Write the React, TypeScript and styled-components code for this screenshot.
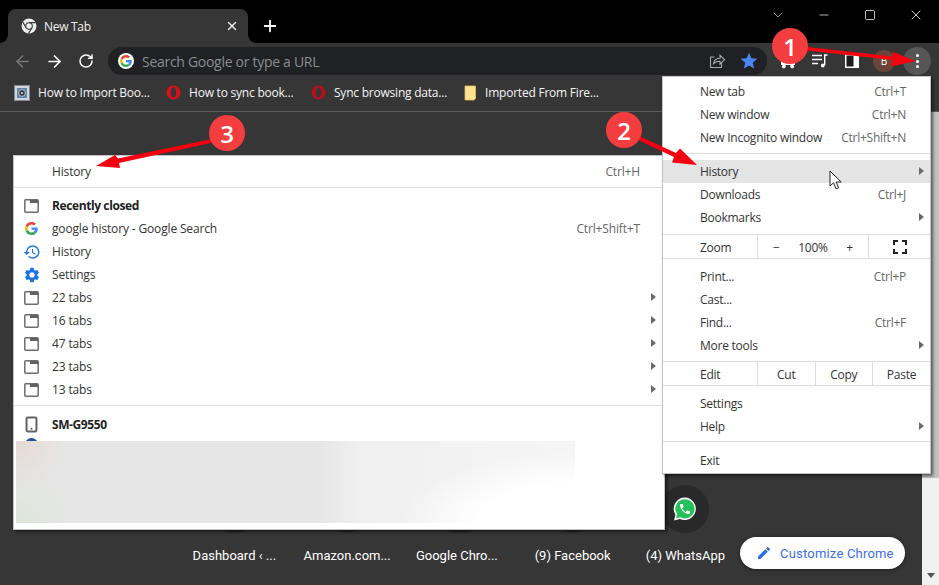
import React from "react"
import styled, { createGlobalStyle } from "styled-components"
import { ArrowLeft, ArrowRight, RotateCw, X, Plus, ChevronDown, Minus, Square, Smartphone } from "lucide-react"
import { MdEdit, MdHistory, MdSettings, MdStar } from "react-icons/md"

const GlobalStyle = createGlobalStyle`
  html, body {
    margin: 0;
    padding: 0;
    background: #363636;
  }
  * {
    box-sizing: border-box;
  }
`

const Screen = styled.div`
  position: relative;
  width: 939px;
  height: 585px;
  overflow: hidden;
  display: flex;
  flex-direction: column;
  background: #363636;
  font-family: "Open Sans", "Liberation Sans", sans-serif;
  font-size: 12px;
`

const TitleBar = styled.div`
  height: 43px;
  flex: none;
  background: #000;
  display: flex;
  align-items: flex-end;
  padding-left: 8px;
  color: #fff;
`

const Tab = styled.div`
  position: relative;
  width: 240px;
  height: 34px;
  background: #363636;
  border-radius: 8px 8px 0 0;
  display: flex;
  align-items: center;
  padding: 0 9px 0 13px;
  gap: 7px;

  &::before,
  &::after {
    content: "";
    position: absolute;
    bottom: 0;
    width: 8px;
    height: 8px;
  }
  &::before {
    left: -8px;
    background: radial-gradient(circle at 0 0, #000 7.5px, #363636 8px);
  }
  &::after {
    right: -8px;
    background: radial-gradient(circle at 100% 0, #000 7.5px, #363636 8px);
  }
`

const TabTitle = styled.span`
  flex: 1;
  color: #f1f1f1;
  font-size: 12px;
  letter-spacing: -0.3px;
`

const NewTabButton = styled.div`
  width: 28px;
  height: 34px;
  margin-left: 8px;
  display: flex;
  align-items: center;
  justify-content: center;
`

const WindowControls = styled.div`
  margin-left: auto;
  align-self: flex-start;
  display: flex;
`

const WindowButton = styled.div`
  width: 46px;
  height: 30px;
  display: flex;
  align-items: center;
  justify-content: center;
`

const Toolbar = styled.div`
  height: 34px;
  flex: none;
  display: flex;
  align-items: flex-start;
  padding: 4px 0 0 6px;
`

const ToolButton = styled.div`
  width: 32px;
  height: 28px;
  flex: none;
  display: flex;
  align-items: center;
  justify-content: center;
  color: #fff;
`

const Omnibox = styled.div`
  width: 659px;
  height: 28px;
  margin-left: 6px;
  margin-right: 5px;
  padding: 0 2px 0 10px;
  border-radius: 14px;
  background: #202124;
  display: flex;
  align-items: center;
  flex: none;
`

const GoogleBadge = styled.div`
  width: 16px;
  height: 16px;
  border-radius: 50%;
  background: #fff;
  display: flex;
  align-items: center;
  justify-content: center;
`

const OmniText = styled.span`
  flex: 1;
  margin-left: 8px;
  color: #8b8c8f;
  font-size: 14px;
  letter-spacing: -0.29px;
`

const Avatar = styled.div`
  width: 22px;
  height: 22px;
  border-radius: 50%;
  background: #6a4438;
  color: #fff;
  font-size: 10px;
  display: flex;
  align-items: center;
  justify-content: center;
`

const MenuButton = styled.div`
  width: 28px;
  height: 28px;
  margin-left: 3px;
  border-radius: 50%;
  background: #565656;
  display: flex;
  flex-direction: column;
  align-items: center;
  justify-content: center;
  gap: 2.5px;

  span {
    width: 3px;
    height: 3px;
    border-radius: 50%;
    background: #fff;
  }
`

const BookmarksBar = styled.div`
  height: 35px;
  flex: none;
  display: flex;
  align-items: center;
  padding: 0 0 3px 14px;
  border-bottom: 1px solid #5c5c5c;
`

const Bookmark = styled.div<{ $w: number }>`
  width: ${(p) => p.$w}px;
  flex: none;
  display: flex;
  align-items: center;
  color: #f4f4f4;
  font-size: 12px;
  letter-spacing: -0.22px;
  white-space: nowrap;

  svg {
    flex: none;
    margin-right: 8px;
  }
`

const Body = styled.div`
  flex: 1;
  display: flex;
  min-height: 0;
`

const Page = styled.div`
  position: relative;
  flex: 1;
  display: flex;
  flex-direction: column;
  justify-content: flex-end;
  padding: 0 0 19px 178px;
`

const TileGrid = styled.div`
  display: grid;
  grid-template-columns: repeat(5, 112.75px);
  row-gap: 13px;
  justify-items: center;
`

const Tile = styled.div`
  width: 48px;
  height: 48px;
  border-radius: 50%;
  background: #292929;
  display: flex;
  align-items: center;
  justify-content: center;
`

const TileLabel = styled.div<{ $shift?: number }>`
  height: 20px;
  line-height: 20px;
  margin-right: ${(p) => p.$shift ?? 0}px;
  color: #fff;
  font-family: Roboto, "Liberation Sans", sans-serif;
  font-size: 13px;
  white-space: nowrap;
`

const CustomizeButton = styled.div`
  position: absolute;
  right: 17px;
  bottom: 16px;
  width: 165px;
  height: 32px;
  border-radius: 16px;
  background: #fff;
  box-shadow: 0 1px 4px rgba(0, 0, 0, 0.4);
  color: #3c6ee8;
  font-family: Roboto, "Liberation Sans", sans-serif;
  font-size: 13px;
  letter-spacing: 0.2px;
  display: flex;
  align-items: center;
  padding-left: 16px;
  gap: 8px;
`

const Scrollbar = styled.div`
  width: 17px;
  flex: none;
  background: #f1f1f1;
  display: flex;
  flex-direction: column;
  align-items: center;
`

const ScrollThumb = styled.div`
  width: 100%;
  height: 366px;
  background: #c1c1c1;
`

const ScrollArrow = styled.div`
  margin-top: auto;
  margin-bottom: 7px;
  width: 0;
  height: 0;
  border-left: 4.5px solid transparent;
  border-right: 4.5px solid transparent;
  border-top: 5px solid #505050;
`

const Menu = styled.div`
  position: absolute;
  z-index: 2;
  background: #fff;
  color: #333;
  border: 1px solid #c4c4c4;
  box-shadow: 2px 2px 3px rgba(0, 0, 0, 0.55);
  font-size: 12px;
`

const MainMenu = styled(Menu)`
  left: 662px;
  top: 76px;
  width: 269px;
  height: 398px;
  padding-top: 3px;
  letter-spacing: -0.25px;
`

const HistoryMenu = styled(Menu)`
  left: 13px;
  top: 155px;
  width: 652px;
  height: 375px;
  padding-top: 4px;
  overflow: hidden;
  letter-spacing: -0.15px;
`

const MainRow = styled.div<{ $active?: boolean }>`
  height: 23px;
  display: flex;
  align-items: center;
  padding: 0 24px 0 37px;
  background: ${(p) => (p.$active ? "#e4e4e4" : "transparent")};
  position: relative;
`

const HistoryRow = styled.div`
  height: 23px;
  display: flex;
  align-items: center;
  padding: 0 24px 0 38px;
  position: relative;
`

const RowIcon = styled.div`
  position: absolute;
  left: 10px;
  top: 3px;
  width: 15px;
  height: 17px;
  display: flex;
  align-items: center;
  justify-content: center;

  svg {
    flex: none;
  }
`

const Shortcut = styled.span`
  margin-left: auto;
  color: #666;
`

const Strong = styled.span`
  font-weight: 700;
  color: #222;
  letter-spacing: -0.4px;
`

const SubArrow = styled.span<{ $right: number }>`
  position: absolute;
  right: ${(p) => p.$right}px;
  top: 7px;
  width: 0;
  height: 0;
  border-top: 4px solid transparent;
  border-bottom: 4px solid transparent;
  border-left: 5px solid #6b6b6b;
`

const Separator = styled.div<{ $top?: number; $bottom?: number }>`
  height: 1px;
  background: #dcdcdc;
  margin: ${(p) => p.$top ?? 4}px 0 ${(p) => p.$bottom ?? 6}px;
`

const Band = styled.div<{ $top?: number }>`
  height: 25px;
  margin: ${(p) => p.$top ?? 4}px 0 6px;
  border-top: 1px solid #dcdcdc;
  border-bottom: 1px solid #dcdcdc;
  display: grid;
  grid-template-columns: 94px 57.5px 57.5px 1fr;
  align-items: center;
`

const ZoomBand = styled(Band)`
  grid-template-columns: 94px 111px 1fr;
`

const BandLabel = styled.div`
  padding: 1px 0 0 37px;
`

const BandCell = styled.div`
  height: 100%;
  padding-top: 1px;
  border-left: 1px solid #dcdcdc;
  display: flex;
  align-items: center;
  justify-content: center;
`

const ZoomControls = styled(BandCell)`
  justify-content: space-between;
  padding: 1px 15px 0;
`

const ClippedRow = styled.div`
  height: 5px;
  overflow: hidden;
  padding: 2px 0 0 11px;

  span {
    display: block;
    width: 13px;
    height: 13px;
    border-radius: 50%;
    background: radial-gradient(circle at 50% 60%, #a08468 0 3px, #24509a 4px);
  }
`

const Redacted = styled.div`
  width: 559px;
  height: 82px;
  margin-left: 2px;
  background: radial-gradient(ellipse 175px 72px at 100% 100%, #ffffff 55%, transparent),
    radial-gradient(ellipse 55px 60px at 0 100%, #dde6d8, transparent),
    radial-gradient(ellipse 50px 55px at 0 0, #e6dad4, transparent),
    linear-gradient(90deg, #e6e6e6 0%, #e6e6e6 54%, #f0f0f0 62%, #f5f5f5 100%);
`

const Annotations = styled.svg`
  position: absolute;
  left: 0;
  top: 0;
  z-index: 3;
  pointer-events: none;
`

const Badge = styled.div<{ $x: number; $y: number }>`
  position: absolute;
  z-index: 4;
  left: ${(p) => p.$x - 18}px;
  top: ${(p) => p.$y - 18}px;
  width: 36px;
  height: 36px;
  border-radius: 50%;
  background: #f33d3f;
  color: #fff;
  font-family: "Open Sans", "Liberation Sans", sans-serif;
  font-size: 24px;
  font-weight: 600;
  display: flex;
  align-items: center;
  justify-content: center;
`

const Cursor = styled.svg`
  position: absolute;
  z-index: 4;
  left: 829px;
  top: 170px;
`

const GoogleG = ({ size }: { size: number }) => (
  <svg width={size} height={size} viewBox="0 0 48 48">
    <path fill="#EA4335" d="M24 9.5c3.54 0 6.71 1.22 9.21 3.6l6.85-6.85C35.9 2.38 30.47 0 24 0 14.62 0 6.51 5.38 2.56 13.22l7.98 6.19C12.43 13.72 17.74 9.5 24 9.5z" />
    <path fill="#4285F4" d="M46.98 24.55c0-1.57-.15-3.09-.38-4.55H24v9.02h12.94c-.58 2.96-2.26 5.48-4.78 7.18l7.73 6c4.51-4.18 7.09-10.36 7.09-17.65z" />
    <path fill="#FBBC05" d="M10.53 28.59c-.48-1.45-.76-2.99-.76-4.59s.27-3.14.76-4.59l-7.98-6.19C.92 16.46 0 20.12 0 24c0 3.88.92 7.54 2.56 10.78l7.97-6.19z" />
    <path fill="#34A853" d="M24 48c6.48 0 11.93-2.13 15.89-5.81l-7.73-6c-2.15 1.45-4.92 2.3-8.16 2.3-6.26 0-11.57-4.22-13.47-9.91l-7.98 6.19C6.51 42.62 14.62 48 24 48z" />
  </svg>
)

const ChromeIcon = () => (
  <svg width="16" height="16" viewBox="0 0 16 16">
    <circle cx="8" cy="8" r="7.5" fill="#eceded" />
    <path d="M8 4.6h6.6M10.9 9.7l-3.3 5.7M5.1 9.7 1.8 4" stroke="#363636" strokeWidth="1.1" fill="none" />
    <circle cx="8" cy="8" r="3.3" fill="#eceded" stroke="#363636" strokeWidth="1.1" />
  </svg>
)

const ShareIcon = () => (
  <svg width="18" height="18" viewBox="0 0 18 18" fill="none" stroke="#a9a9a9" strokeWidth="1.1">
    <path d="M6.5 5H2.5v10.5h11V11" />
    <path d="M5.5 11.5c.6-3.4 3.2-5.2 6.5-5.2V3.4l4.6 4.4-4.6 4.2V9.2c-2.8 0-4.9.6-6.5 2.3z" />
  </svg>
)

const ExtensionIcon = () => (
  <svg width="16" height="16" viewBox="0 0 16 16">
    <path d="M1 2h14v10h-1.5a2.2 2.2 0 0 1 0 3 2.2 2.2 0 0 1-3-3h-5a2.2 2.2 0 0 1-3 3 2.2 2.2 0 0 1 0-3H1z" fill="#fff" />
  </svg>
)

const MediaIcon = () => (
  <svg width="16" height="16" viewBox="0 0 16 16" fill="none" stroke="#fff" strokeWidth="1.4">
    <path d="M0 2.5h10M0 6.5h10M0 10.5h6" />
    <path d="M12.7 12V2h2.8" />
    <circle cx="10.8" cy="12.5" r="1.9" fill="#fff" stroke="none" />
  </svg>
)

const SidePanelIcon = () => (
  <svg width="16" height="16" viewBox="0 0 16 16">
    <rect x="1" y="1" width="14" height="14" fill="#fff" />
    <rect x="2.5" y="2.5" width="7" height="11" fill="#1c1c1c" />
  </svg>
)

const PictureIcon = () => (
  <svg width="16" height="16" viewBox="0 0 16 16">
    <rect x="0.5" y="0.5" width="15" height="15" fill="#cfd6dc" stroke="#7f8a94" />
    <rect x="3" y="3" width="10" height="10" fill="#5f86a8" />
    <circle cx="8" cy="8" r="3.4" fill="#3a3f44" stroke="#d5d5d5" strokeWidth="0.8" />
    <circle cx="8" cy="8" r="1" fill="#d5d5d5" />
  </svg>
)

const OperaIcon = ({ dark }: { dark?: boolean }) => (
  <svg width="15" height="15" viewBox="0 0 16 16">
    <ellipse cx="8" cy="8" rx="7.4" ry="7.6" fill={dark ? "#b4101f" : "#d9101c"} />
    <ellipse cx="8" cy="8" rx="2.8" ry="5.4" fill="#363636" />
  </svg>
)

const FolderIcon = () => (
  <svg width="13" height="16" viewBox="0 0 13 16">
    <path d="M1 1h10.5v12.5L10 15H1z" fill="#fde293" stroke="#e9c25f" strokeWidth="0.8" />
  </svg>
)

const WindowIcon = () => (
  <svg width="15" height="14" viewBox="0 0 15 14">
    <rect x="0.8" y="0.8" width="13.4" height="12.4" rx="1" fill="#fff" stroke="#6a6d71" strokeWidth="1.5" />
    <rect x="6" y="1" width="8" height="3" fill="#5f6368" />
  </svg>
)

const WhatsAppIcon = () => (
  <svg width="26" height="26" viewBox="0 0 26 26">
    <path d="M13 1.5a11.3 11.3 0 0 0-9.6 17.2L2 24.5l5.9-1.4A11.3 11.3 0 1 0 13 1.5z" fill="#fff" />
    <path d="M13 3.2a9.6 9.6 0 0 0-8 14.9l-.9 4.1 4.2-1A9.6 9.6 0 1 0 13 3.2z" fill="#25c05a" />
    <path
      transform="translate(6.5 6.5) scale(0.54)"
      fill="#fff"
      d="M6.62 10.79c1.44 2.83 3.76 5.14 6.59 6.59l2.2-2.2c.27-.27.67-.36 1.02-.24 1.12.37 2.33.57 3.57.57.55 0 1 .45 1 1V20c0 .55-.45 1-1 1-9.39 0-17-7.61-17-17 0-.55.45-1 1-1h3.5c.55 0 1 .45 1 1 0 1.25.2 2.45.57 3.57.11.35.03.74-.25 1.02l-2.2 2.2z"
    />
  </svg>
)

const FullscreenIcon = () => (
  <svg width="14" height="14" viewBox="0 0 14 14" fill="none" stroke="#222" strokeWidth="2">
    <path d="M1 5V1h4M9 1h4v4M13 9v4H9M5 13H1V9" />
  </svg>
)

const tabGroups = ["22 tabs", "16 tabs", "47 tabs", "23 tabs", "13 tabs"]
const tileLabels = [
  { text: "Dashboard ‹ ...", shift: 0 },
  { text: "Amazon.com...", shift: 0 },
  { text: "Google Chro...", shift: 6 },
  { text: "(9) Facebook", shift: 0 },
  { text: "(4) WhatsApp", shift: 0 },
]

const App: React.FC = () => {
  return (
    <Screen>
      <GlobalStyle />
      <TitleBar>
        <Tab>
          <ChromeIcon />
          <TabTitle>New Tab</TabTitle>
          <X size={14} color="#eee" strokeWidth={2.4} />
        </Tab>
        <NewTabButton>
          <Plus size={18} color="#fff" strokeWidth={2.4} />
        </NewTabButton>
        <WindowControls>
          <WindowButton>
            <ChevronDown size={16} color="#bbb" strokeWidth={1.2} />
          </WindowButton>
          <WindowButton>
            <Minus size={14} color="#fff" strokeWidth={1.2} />
          </WindowButton>
          <WindowButton>
            <Square size={12} color="#fff" strokeWidth={1.5} />
          </WindowButton>
          <WindowButton>
            <X size={16} color="#fff" strokeWidth={1.2} />
          </WindowButton>
        </WindowControls>
      </TitleBar>

      <Toolbar>
        <ToolButton>
          <ArrowLeft size={19} color="#777" strokeWidth={2} />
        </ToolButton>
        <ToolButton>
          <ArrowRight size={19} strokeWidth={2} />
        </ToolButton>
        <ToolButton>
          <RotateCw size={16} strokeWidth={2.2} />
        </ToolButton>
        <Omnibox>
          <GoogleBadge>
            <GoogleG size={12} />
          </GoogleBadge>
          <OmniText>Search Google or type a URL</OmniText>
          <ToolButton>
            <ShareIcon />
          </ToolButton>
          <ToolButton>
            <MdStar size={20} color="#4a86f0" />
          </ToolButton>
        </Omnibox>
        <ToolButton>
          <ExtensionIcon />
        </ToolButton>
        <ToolButton>
          <MediaIcon />
        </ToolButton>
        <ToolButton>
          <SidePanelIcon />
        </ToolButton>
        <ToolButton>
          <Avatar>B</Avatar>
        </ToolButton>
        <MenuButton>
          <span />
          <span />
          <span />
        </MenuButton>
      </Toolbar>

      <BookmarksBar>
        <Bookmark $w={152}>
          <PictureIcon />
          How to Import Boo...
        </Bookmark>
        <Bookmark $w={145}>
          <OperaIcon />
          How to sync book...
        </Bookmark>
        <Bookmark $w={153}>
          <OperaIcon dark />
          Sync browsing data...
        </Bookmark>
        <Bookmark $w={160}>
          <FolderIcon />
          Imported From Fire...
        </Bookmark>
      </BookmarksBar>

      <Body>
        <Page>
          <TileGrid>
            <Tile />
            <Tile />
            <Tile />
            <Tile />
            <Tile>
              <WhatsAppIcon />
            </Tile>
            {tileLabels.map((label) => (
              <TileLabel key={label.text} $shift={label.shift}>
                {label.text}
              </TileLabel>
            ))}
          </TileGrid>
          <CustomizeButton>
            <MdEdit size={16} color="#2f6fe4" />
            Customize Chrome
          </CustomizeButton>
        </Page>
        <Scrollbar>
          <ScrollThumb />
          <ScrollArrow />
        </Scrollbar>
      </Body>

      <HistoryMenu>
        <HistoryRow>
          History
          <Shortcut>Ctrl+H</Shortcut>
        </HistoryRow>
        <Separator />
        <HistoryRow>
          <RowIcon>
            <WindowIcon />
          </RowIcon>
          <Strong>Recently closed</Strong>
        </HistoryRow>
        <HistoryRow>
          <RowIcon>
            <GoogleG size={13} />
          </RowIcon>
          google history - Google Search
          <Shortcut>Ctrl+Shift+T</Shortcut>
        </HistoryRow>
        <HistoryRow>
          <RowIcon>
            <MdHistory size={18} color="#1a73e8" />
          </RowIcon>
          History
        </HistoryRow>
        <HistoryRow>
          <RowIcon>
            <MdSettings size={18} color="#1a73e8" />
          </RowIcon>
          Settings
        </HistoryRow>
        {tabGroups.map((group) => (
          <HistoryRow key={group}>
            <RowIcon>
              <WindowIcon />
            </RowIcon>
            {group}
            <SubArrow $right={8} />
          </HistoryRow>
        ))}
        <Separator $bottom={7} />
        <HistoryRow>
          <RowIcon>
            <Smartphone size={17} color="#5f6368" strokeWidth={2.8} />
          </RowIcon>
          <Strong>SM-G9550</Strong>
        </HistoryRow>
        <ClippedRow>
          <span />
        </ClippedRow>
        <Redacted />
      </HistoryMenu>

      <MainMenu>
        <MainRow>
          New tab
          <Shortcut>Ctrl+T</Shortcut>
        </MainRow>
        <MainRow>
          New window
          <Shortcut>Ctrl+N</Shortcut>
        </MainRow>
        <MainRow>
          New Incognito window
          <Shortcut>Ctrl+Shift+N</Shortcut>
        </MainRow>
        <Separator />
        <MainRow $active>
          History
          <SubArrow $right={6} />
        </MainRow>
        <MainRow>
          Downloads
          <Shortcut>Ctrl+J</Shortcut>
        </MainRow>
        <MainRow>
          Bookmarks
          <SubArrow $right={6} />
        </MainRow>
        <ZoomBand $top={5}>
          <BandLabel>Zoom</BandLabel>
          <ZoomControls>
            <span>−</span>
            <span>100%</span>
            <span>+</span>
          </ZoomControls>
          <BandCell>
            <FullscreenIcon />
          </BandCell>
        </ZoomBand>
        <MainRow>
          Print...
          <Shortcut>Ctrl+P</Shortcut>
        </MainRow>
        <MainRow>Cast...</MainRow>
        <MainRow>
          Find...
          <Shortcut>Ctrl+F</Shortcut>
        </MainRow>
        <MainRow>
          More tools
          <SubArrow $right={6} />
        </MainRow>
        <Band $top={4}>
          <BandLabel>Edit</BandLabel>
          <BandCell>Cut</BandCell>
          <BandCell>Copy</BandCell>
          <BandCell>Paste</BandCell>
        </Band>
        <MainRow>Settings</MainRow>
        <MainRow>
          Help
          <SubArrow $right={6} />
        </MainRow>
        <Separator $top={3} $bottom={7} />
        <MainRow>Exit</MainRow>
      </MainMenu>

      <Annotations width="939" height="585" viewBox="0 0 939 585">
        <polygon fill="#f4000f" points="807,47 893,56.5 892,51.5 916,61 891,66.5 892,60 807,50.5" />
        <polygon fill="#f4000f" points="638,135.5 676,153 680,148.5 697,165 672,162.5 674,157 636,139" />
        <polygon fill="#f4000f" points="212,139 118,158.5 115,155 96,166 120,168 119,163 213,142.5" />
      </Annotations>

      <Badge $x={790} $y={46}>1</Badge>
      <Badge $x={624} $y={130}>2</Badge>
      <Badge $x={227} $y={133}>3</Badge>

      <Cursor width="14" height="21" viewBox="0 0 14 21">
        <path d="M1 1v15l3.6-3.2 2.4 6 2.6-1-2.4-5.8h5z" fill="#fff" stroke="#222" strokeWidth="1" />
      </Cursor>
    </Screen>
  )
}

export default App
